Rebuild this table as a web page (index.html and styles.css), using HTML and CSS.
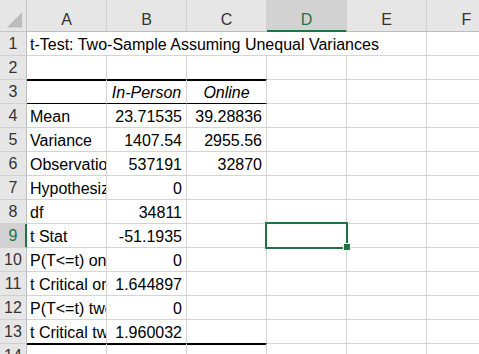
FILE: index.html
```html
<!DOCTYPE html>
<html>
<head>
<meta charset="utf-8">
<link rel="stylesheet" href="styles.css">
</head>
<body>
<div class="sheet">
  <div class="h corner"><svg width="27" height="31" viewBox="0 0 27 31"><polygon points="7,28 23,28 23,12" fill="#bcbcbc"/></svg></div>
  <div class="h col">A</div>
  <div class="h col">B</div>
  <div class="h col">C</div>
  <div class="h col sel">D</div>
  <div class="h col">E</div>
  <div class="h col">F</div>

  <div class="h row">1</div>
  <div class="c title">t-Test: Two-Sample Assuming Unequal Variances</div>
  <div class="c"></div>

  <div class="h row">2</div>
  <div class="c tb"></div><div class="c tb"></div><div class="c tb"></div><div class="c"></div><div class="c"></div><div class="c"></div>

  <div class="h row">3</div>
  <div class="c hd"></div><div class="c hd i">In-Person</div><div class="c hd i">Online</div><div class="c"></div><div class="c"></div><div class="c"></div>

  <div class="h row">4</div>
  <div class="c">Mean</div><div class="c n">23.71535</div><div class="c n">39.28836</div><div class="c"></div><div class="c"></div><div class="c"></div>

  <div class="h row">5</div>
  <div class="c">Variance</div><div class="c n">1407.54</div><div class="c n">2955.56</div><div class="c"></div><div class="c"></div><div class="c"></div>

  <div class="h row">6</div>
  <div class="c">Observations</div><div class="c n">537191</div><div class="c n">32870</div><div class="c"></div><div class="c"></div><div class="c"></div>

  <div class="h row">7</div>
  <div class="c">Hypothesized Mean Difference</div><div class="c n">0</div><div class="c"></div><div class="c"></div><div class="c"></div><div class="c"></div>

  <div class="h row">8</div>
  <div class="c">df</div><div class="c n">34811</div><div class="c"></div><div class="c"></div><div class="c"></div><div class="c"></div>

  <div class="h row sel-row">9</div>
  <div class="c">t Stat</div><div class="c n">-51.1935</div><div class="c"></div><div class="c active"><div class="selection"><div class="handle"></div></div></div><div class="c"></div><div class="c"></div>

  <div class="h row">10</div>
  <div class="c">P(T&lt;=t) one-tail</div><div class="c n">0</div><div class="c"></div><div class="c"></div><div class="c"></div><div class="c"></div>

  <div class="h row">11</div>
  <div class="c">t Critical one-tail</div><div class="c n">1.644897</div><div class="c"></div><div class="c"></div><div class="c"></div><div class="c"></div>

  <div class="h row">12</div>
  <div class="c">P(T&lt;=t) two-tail</div><div class="c n">0</div><div class="c"></div><div class="c"></div><div class="c"></div><div class="c"></div>

  <div class="h row">13</div>
  <div class="c end">t Critical two-tail</div><div class="c n end">1.960032</div><div class="c end"></div><div class="c"></div><div class="c"></div><div class="c"></div>

  <div class="h row">14</div>
  <div class="c after"></div><div class="c after"></div><div class="c after"></div><div class="c"></div><div class="c"></div><div class="c"></div>
</div>
</body>
</html>
```

FILE: styles.css
```css
html, body {
  margin: 0;
  padding: 0;
  background: #ffffff;
  overflow: hidden;
}

.sheet {
  display: grid;
  grid-template-columns: 27px repeat(6, 80px);
  grid-template-rows: 32px repeat(14, 24px);
  width: 507px;
  font-family: "Liberation Sans", Arial, sans-serif;
  font-size: 16px;
  color: #000;
}

.h {
  box-sizing: border-box;
  background: #e6e6e6;
  border-right: 1px solid #c4c4c4;
  border-bottom: 1px solid #c4c4c4;
  color: #333333;
  display: flex;
  justify-content: center;
  overflow: hidden;
}

.corner {
  align-items: stretch;
  padding: 0;
}

.corner svg {
  display: block;
}

.col {
  align-items: flex-end;
  line-height: 18px;
  padding-bottom: 2px;
  border-right-color: #cfcfcf;
  border-bottom-color: #bdbdbd;
}

.col.sel {
  background: #d2d2d2;
  color: #217346;
  border-bottom-color: #217346;
  box-shadow: inset 0 -1px 0 #217346;
}

.row {
  line-height: 24px;
  align-items: flex-start;
  border-right-color: #bdbdbd;
  border-bottom-color: #cfcfcf;
}

.row.sel-row {
  background: #d2d2d2;
  color: #217346;
  border-right-color: #217346;
  box-shadow: inset -1px 0 0 #217346;
}

.c {
  box-sizing: border-box;
  border-right: 1px solid #d4d4d4;
  border-bottom: 1px solid #d4d4d4;
  line-height: 25px;
  padding: 0 4px 0 3px;
  white-space: nowrap;
  overflow: hidden;
  display: flex;
  align-items: flex-start;
}

.title {
  grid-column: span 5;
}

.n {
  justify-content: flex-end;
}

.i {
  font-style: italic;
  justify-content: center;
  padding: 0;
}

.tb {
  border-bottom-color: #000;
}

.hd {
  border-bottom-color: #000;
  box-shadow: inset 0 1px 0 #000;
}

.end {
  border-bottom-color: #000;
}

.after {
  box-shadow: inset 0 1px 0 #000;
}

.active {
  position: relative;
  overflow: visible;
}

.selection {
  position: absolute;
  left: -2px;
  top: -2px;
  width: 83px;
  height: 27px;
  box-sizing: border-box;
  border: 2px solid #217346;
  z-index: 2;
}

.handle {
  position: absolute;
  left: 77px;
  top: 20px;
  width: 6px;
  height: 6px;
  background: #217346;
  box-shadow: 0 0 0 1px #ffffff;
}
```
